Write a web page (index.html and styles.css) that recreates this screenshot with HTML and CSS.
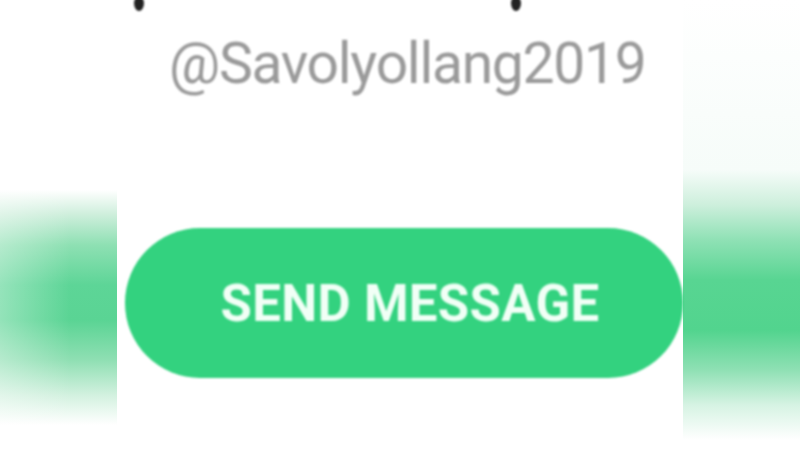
FILE: index.html
```html
<!DOCTYPE html>
<html>
<head>
<meta charset="utf-8">
<link rel="stylesheet" href="styles.css">
</head>
<body>
<div class="page">
  <div class="side side-left"></div>
  <div class="card">
    <div class="cut-name">
      <span class="stroke stroke-a"></span>
      <span class="stroke stroke-b"></span>
    </div>
    <div class="username">@Savolyollang2019</div>
    <div class="btn-row">
      <div class="btn">SEND MESSAGE</div>
    </div>
  </div>
  <div class="side side-right"></div>
</div>
</body>
</html>
```
FILE: styles.css
```css
html, body {
  margin: 0;
  padding: 0;
  width: 800px;
  height: 450px;
  overflow: hidden;
  background: #ffffff;
}
.page {
  display: flex;
  width: 800px;
  height: 450px;
}
.side {
  width: 117px;
  height: 450px;
  flex: none;
}
.side-left {
  background:
    linear-gradient(to right, rgba(255,255,255,0.35) 0%, rgba(255,255,255,0) 60%),
    linear-gradient(to bottom, #ffffff 0px, #ffffff 190px, #cdeedb 215px, #8ee0b3 245px, #5dd597 285px, #5ad494 320px, #8fdfb3 360px, #d2f1df 395px, #ffffff 425px);
}
.side-right {
  background:
    linear-gradient(to bottom, #ffffff 0px, #f6fcf9 170px, #cdefdc 205px, #8fe1b5 240px, #58d592 280px, #52d48e 330px, #8fe0b4 370px, #d6f3e3 405px, #ffffff 440px);
}
.card {
  width: 566px;
  height: 450px;
  flex: none;
  background: #ffffff;
  display: flex;
  flex-direction: column;
  font-family: Roboto, "Liberation Sans", sans-serif;
}
.cut-name {
  height: 12px;
  position: relative;
}
.stroke {
  position: absolute;
  top: -4px;
  width: 10px;
  height: 15px;
  border-radius: 50%;
  background: #222222;
  filter: blur(1px);
}
.stroke-a { left: 17px; }
.stroke-b { left: 394px; }
.username {
  margin-top: 16px;
  padding-left: 52px;
  font-size: 57px;
  line-height: 72px;
  color: #9a9a9a;
  letter-spacing: -1.3px;
  filter: blur(0.8px);
  white-space: nowrap;
}
.btn-row {
  margin-top: 128px;
  padding-left: 8px;
  display: flex;
}
.btn {
  width: 558px;
  height: 150px;
  border-radius: 75px;
  background: #33d27f;
  color: #f1fff6;
  font-weight: 700;
  font-size: 51px;
  letter-spacing: 0.3px;
  display: flex;
  align-items: center;
  justify-content: center;
  padding-left: 12px;
  box-sizing: border-box;
  filter: blur(0.8px);
}
```
